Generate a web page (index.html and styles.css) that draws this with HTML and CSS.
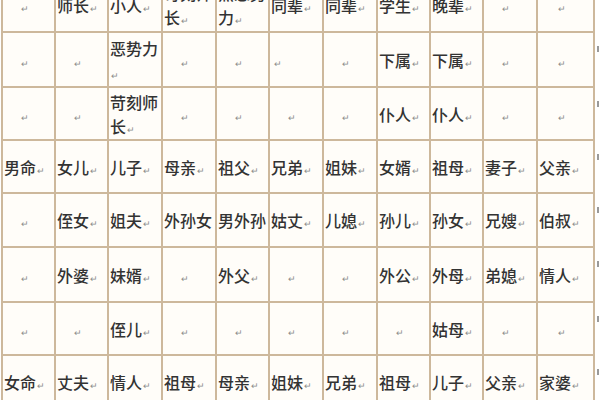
FILE: index.html
```html
<!DOCTYPE html>
<html lang="zh">
<head>
<meta charset="utf-8">
<title>六亲表</title>
<link rel="stylesheet" href="styles.css">
</head>
<body>
<div class="page">
  <div class="sheet">
    <div class="c e"><span class="t"><span class="pm">↵</span></span></div>
    <div class="c"><span class="t">师长<span class="pm">↵</span></span></div>
    <div class="c"><span class="t">小人<span class="pm">↵</span></span></div>
    <div class="c"><span class="t">苛刻师长<span class="pm">↵</span></span></div>
    <div class="c"><span class="t">黑恶势力<span class="pm">↵</span></span></div>
    <div class="c"><span class="t">同辈<span class="pm">↵</span></span></div>
    <div class="c"><span class="t">同辈<span class="pm">↵</span></span></div>
    <div class="c"><span class="t">学生<span class="pm">↵</span></span></div>
    <div class="c"><span class="t">晚辈<span class="pm">↵</span></span></div>
    <div class="c e"><span class="t"><span class="pm">↵</span></span></div>
    <div class="c e"><span class="t"><span class="pm">↵</span></span></div>

    <div class="c e"><span class="t"><span class="pm">↵</span></span></div>
    <div class="c e"><span class="t"><span class="pm">↵</span></span></div>
    <div class="c"><span class="t">恶势力<span class="pm">↵</span></span></div>
    <div class="c e"><span class="t"><span class="pm">↵</span></span></div>
    <div class="c e"><span class="t"><span class="pm">↵</span></span></div>
    <div class="c e l"><span class="t"><span class="pm">↵</span></span></div>
    <div class="c e"><span class="t"><span class="pm">↵</span></span></div>
    <div class="c"><span class="t">下属<span class="pm">↵</span></span></div>
    <div class="c"><span class="t">下属<span class="pm">↵</span></span></div>
    <div class="c e"><span class="t"><span class="pm">↵</span></span></div>
    <div class="c e"><span class="t"><span class="pm">↵</span></span></div>

    <div class="c e"><span class="t"><span class="pm">↵</span></span></div>
    <div class="c e"><span class="t"><span class="pm">↵</span></span></div>
    <div class="c"><span class="t">苛刻师长<span class="pm">↵</span></span></div>
    <div class="c e"><span class="t"><span class="pm">↵</span></span></div>
    <div class="c e"><span class="t"><span class="pm">↵</span></span></div>
    <div class="c e"><span class="t"><span class="pm">↵</span></span></div>
    <div class="c e"><span class="t"><span class="pm">↵</span></span></div>
    <div class="c"><span class="t">仆人<span class="pm">↵</span></span></div>
    <div class="c"><span class="t">仆人<span class="pm">↵</span></span></div>
    <div class="c e"><span class="t"><span class="pm">↵</span></span></div>
    <div class="c e"><span class="t"><span class="pm">↵</span></span></div>

    <div class="c"><span class="t">男命<span class="pm">↵</span></span></div>
    <div class="c"><span class="t">女儿<span class="pm">↵</span></span></div>
    <div class="c"><span class="t">儿子<span class="pm">↵</span></span></div>
    <div class="c"><span class="t">母亲<span class="pm">↵</span></span></div>
    <div class="c"><span class="t">祖父<span class="pm">↵</span></span></div>
    <div class="c"><span class="t">兄弟<span class="pm">↵</span></span></div>
    <div class="c"><span class="t">姐妹<span class="pm">↵</span></span></div>
    <div class="c"><span class="t">女婿<span class="pm">↵</span></span></div>
    <div class="c"><span class="t">祖母<span class="pm">↵</span></span></div>
    <div class="c"><span class="t">妻子<span class="pm">↵</span></span></div>
    <div class="c"><span class="t">父亲<span class="pm">↵</span></span></div>

    <div class="c e"><span class="t"><span class="pm">↵</span></span></div>
    <div class="c"><span class="t">侄女<span class="pm">↵</span></span></div>
    <div class="c"><span class="t">姐夫<span class="pm">↵</span></span></div>
    <div class="c"><span class="t">外孙女</span></div>
    <div class="c"><span class="t">男外孙</span></div>
    <div class="c"><span class="t">姑丈<span class="pm">↵</span></span></div>
    <div class="c"><span class="t">儿媳<span class="pm">↵</span></span></div>
    <div class="c"><span class="t">孙儿<span class="pm">↵</span></span></div>
    <div class="c"><span class="t">孙女<span class="pm">↵</span></span></div>
    <div class="c"><span class="t">兄嫂<span class="pm">↵</span></span></div>
    <div class="c"><span class="t">伯叔<span class="pm">↵</span></span></div>

    <div class="c e"><span class="t"><span class="pm">↵</span></span></div>
    <div class="c"><span class="t">外婆<span class="pm">↵</span></span></div>
    <div class="c"><span class="t">妹婿<span class="pm">↵</span></span></div>
    <div class="c e"><span class="t"><span class="pm">↵</span></span></div>
    <div class="c"><span class="t">外父<span class="pm">↵</span></span></div>
    <div class="c e"><span class="t"><span class="pm">↵</span></span></div>
    <div class="c e"><span class="t"><span class="pm">↵</span></span></div>
    <div class="c"><span class="t">外公<span class="pm">↵</span></span></div>
    <div class="c"><span class="t">外母<span class="pm">↵</span></span></div>
    <div class="c"><span class="t">弟媳<span class="pm">↵</span></span></div>
    <div class="c"><span class="t">情人<span class="pm">↵</span></span></div>

    <div class="c e"><span class="t"><span class="pm">↵</span></span></div>
    <div class="c e"><span class="t"><span class="pm">↵</span></span></div>
    <div class="c"><span class="t">侄儿<span class="pm">↵</span></span></div>
    <div class="c e"><span class="t"><span class="pm">↵</span></span></div>
    <div class="c e"><span class="t"><span class="pm">↵</span></span></div>
    <div class="c e"><span class="t"><span class="pm">↵</span></span></div>
    <div class="c e"><span class="t"><span class="pm">↵</span></span></div>
    <div class="c e"><span class="t"><span class="pm">↵</span></span></div>
    <div class="c"><span class="t">姑母<span class="pm">↵</span></span></div>
    <div class="c e"><span class="t"><span class="pm">↵</span></span></div>
    <div class="c e"><span class="t"><span class="pm">↵</span></span></div>

    <div class="c"><span class="t">女命<span class="pm">↵</span></span></div>
    <div class="c"><span class="t">丈夫<span class="pm">↵</span></span></div>
    <div class="c"><span class="t">情人<span class="pm">↵</span></span></div>
    <div class="c"><span class="t">祖母<span class="pm">↵</span></span></div>
    <div class="c"><span class="t">母亲<span class="pm">↵</span></span></div>
    <div class="c"><span class="t">姐妹<span class="pm">↵</span></span></div>
    <div class="c"><span class="t">兄弟<span class="pm">↵</span></span></div>
    <div class="c"><span class="t">祖母<span class="pm">↵</span></span></div>
    <div class="c"><span class="t">儿子<span class="pm">↵</span></span></div>
    <div class="c"><span class="t">父亲<span class="pm">↵</span></span></div>
    <div class="c"><span class="t">家婆<span class="pm">↵</span></span></div>
  </div>
  <div class="ends">
    <div class="end"></div><div class="end"></div><div class="end"></div><div class="end"></div>
    <div class="end"></div><div class="end"></div><div class="end"></div><div class="end"></div>
  </div>
</div>
</body>
</html>
```
FILE: styles.css
```css
html, body {
  margin: 0;
  padding: 0;
  background: #ffffff;
  overflow: hidden;
}
.page {
  display: flex;
  align-items: flex-start;
  margin-top: -23px;
  margin-left: 1px;
}
.sheet {
  display: grid;
  grid-template-columns: 51px 51px 52px 52px 51px 52px 52px 51px 51px 52px 55px;
  grid-template-rows: 52px 53px 51px 51px 52px 53px 51px 52px;
  gap: 2px;
  padding: 2px;
  background: #cdb89c;
  font-family: "Noto Sans CJK SC", "Noto Sans", sans-serif;
  font-size: 16px;
  line-height: 24px;
  color: #333333;
  font-weight: 500;
}
.c {
  background: #fffdf9;
  display: flex;
  align-items: center;
  padding-left: 1px;
  overflow: hidden;
}
.t {
  display: block;
  word-break: break-all;
}
.e {
  justify-content: center;
  padding-right: 10px;
}
.l {
  justify-content: flex-start;
  padding-left: 3px;
}
.pm {
  font-size: 9px;
  font-weight: 400;
  line-height: 10px;
  color: #8c8c8c;
  margin-left: 1px;
}
.ends {
  display: grid;
  grid-template-rows: 52px 53px 51px 51px 52px 53px 51px 52px;
  gap: 2px;
  padding: 2px 0;
  margin-left: 2px;
}
.end::after {
  content: "";
  display: block;
  width: 2px;
  height: 6px;
  margin-top: 13px;
  background: #9a9a9a;
}
```
